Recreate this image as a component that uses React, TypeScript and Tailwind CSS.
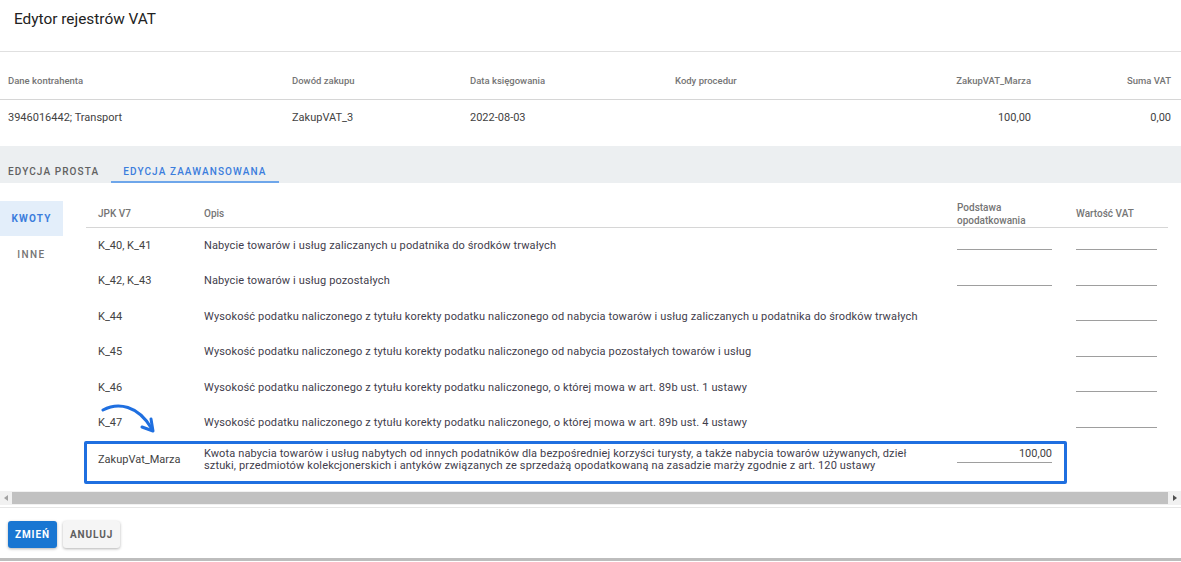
import React from "react"

interface Row {
  code: string
  desc: string[]
  base: boolean
  vat: boolean
  value?: string
  marked?: boolean
}

const rows: Row[] = [
  { code: "K_40, K_41", desc: ["Nabycie towarów i usług zaliczanych u podatnika do środków trwałych"], base: true, vat: true },
  { code: "K_42, K_43", desc: ["Nabycie towarów i usług pozostałych"], base: true, vat: true },
  {
    code: "K_44",
    desc: ["Wysokość podatku naliczonego z tytułu korekty podatku naliczonego od nabycia towarów i usług zaliczanych u podatnika do środków trwałych"],
    base: false,
    vat: true,
  },
  { code: "K_45", desc: ["Wysokość podatku naliczonego z tytułu korekty podatku naliczonego od nabycia pozostałych towarów i usług"], base: false, vat: true },
  { code: "K_46", desc: ["Wysokość podatku naliczonego z tytułu korekty podatku naliczonego, o której mowa w art. 89b ust. 1 ustawy"], base: false, vat: true },
  { code: "K_47", desc: ["Wysokość podatku naliczonego z tytułu korekty podatku naliczonego, o której mowa w art. 89b ust. 4 ustawy"], base: false, vat: true },
  {
    code: "ZakupVat_Marza",
    desc: [
      "Kwota nabycia towarów i usług nabytych od innych podatników dla bezpośredniej korzyści turysty, a także nabycia towarów używanych, dzieł",
      "sztuki, przedmiotów kolekcjonerskich i antyków związanych ze sprzedażą opodatkowaną na zasadzie marży zgodnie z art. 120 ustawy",
    ],
    base: true,
    vat: false,
    value: "100,00",
    marked: true,
  },
]

function Field({ width, value, offset }: { width: string; value?: string; offset: string }) {
  return (
    <div
      className={`${width} ${offset} relative h-[17px] border-b border-[#9e9e9e] text-right text-[11px] leading-[16px] text-[#424242]`}
    >
      {value}
    </div>
  )
}

export default function App() {
  return (
    <div className="w-[1181px] h-[562px] bg-white overflow-hidden font-['Roboto',sans-serif] text-[#424242]">
      {/* Title */}
      <div className="h-[52px] border-b border-[#e0e0e0] pl-[14px] pt-[7px]">
        <h1 className="text-[15.4px] leading-6 text-[#222]">Edytor rejestrów VAT</h1>
      </div>

      {/* Summary table */}
      <div className="grid grid-cols-[284px_178px_205px_1fr_160px_140px] pl-2 pr-[10px] h-[48px] items-end pb-[11px] border-b border-[#d6d6d6] text-[9.5px] leading-[14px] font-medium text-[#757575]">
        <div>Dane kontrahenta</div>
        <div>Dowód zakupu</div>
        <div>Data księgowania</div>
        <div>Kody procedur</div>
        <div className="text-right">ZakupVAT_Marza</div>
        <div className="text-right">Suma VAT</div>
      </div>
      <div className="grid grid-cols-[284px_178px_205px_1fr_160px_140px] pl-2 pr-[10px] h-[46px] pt-[11px] text-[11px] leading-[14px] text-[#424242]">
        <div>3946016442; Transport</div>
        <div>ZakupVAT_3</div>
        <div>2022-08-03</div>
        <div></div>
        <div className="text-right">100,00</div>
        <div className="text-right">0,00</div>
      </div>

      {/* Tabs */}
      <div className="h-[37px] bg-[#eceff1] flex items-end">
        <div className="pl-2 pr-3 pb-[2px] border-b-2 border-transparent text-[10px] leading-[14px] font-medium tracking-[0.11em] text-[#616161]">
          EDYCJA PROSTA
        </div>
        <div className="px-3 pb-[2px] border-b-2 border-[#6ea6ea] text-[10px] leading-[14px] font-medium tracking-[0.11em] text-[#3b7ddd]">
          EDYCJA ZAAWANSOWANA
        </div>
      </div>

      {/* Advanced editor */}
      <div className="flex">
        <div className="w-[63px] pt-[18px] shrink-0">
          <div className="h-[35px] bg-[#e3eefa] flex items-center justify-center text-[10px] font-bold tracking-[0.12em] text-[#3b7ddd]">
            KWOTY
          </div>
          <div className="h-[36px] flex items-center justify-center text-[10px] font-medium tracking-[0.14em] text-[#757575]">
            INNE
          </div>
        </div>

        <div className="ml-[23px] mt-[13px] w-[1082px] relative">
          <div className="grid grid-cols-[106px_753px_119px_104px] h-[32px] items-center pt-[4px] border-b border-[#d6d6d6] text-[10px] leading-[13px] font-medium text-[#757575]">
            <div className="pl-3">JPK V7</div>
            <div className="pl-3">Opis</div>
            <div className="pl-3">
              Podstawa
              <br />
              opodatkowania
            </div>
            <div className="pl-3">Wartość VAT</div>
          </div>

          {rows.map((r) => (
            <div
              key={r.code}
              className={`grid grid-cols-[106px_753px_119px_104px] text-[11px] leading-[12px] relative ${
                r.marked ? "h-[44px] items-start pt-[7px]" : "h-[35.5px] items-center"
              }`}
            >
              <div className={`pl-3 text-[#424242] ${r.marked ? "mt-[6px]" : ""}`}>{r.code}</div>
              <div className="pl-3 text-[#3f3d4c] tracking-[0.012em]">
                {r.desc.map((line) => (
                  <div key={line} className="whitespace-nowrap">
                    {line}
                  </div>
                ))}
              </div>
              <div className="pl-3">
                {r.base && <Field width="w-[95px]" value={r.value} offset={r.marked ? "-top-[2px]" : "-top-[4px]"} />}
              </div>
              <div className="pl-3">{r.vat && <Field width="w-[81px]" offset="-top-[4px]" />}</div>
              {r.marked && (
                <div className="absolute left-[-2px] top-0 w-[983px] h-[43px] border-[3px] border-[#1f6fe0] rounded-[2px] pointer-events-none" />
              )}
            </div>
          ))}

          {/* annotation arrow */}
          <svg className="absolute left-[14px] top-[206px]" width="60" height="36" viewBox="0 0 60 36" fill="none">
            <path d="M3 8 C 18 0, 38 3, 52 27" stroke="#1f6fe0" strokeWidth="3" strokeLinecap="round" />
            <path d="M42 25 L53 29 L51 17" stroke="#1f6fe0" strokeWidth="3" strokeLinecap="round" strokeLinejoin="round" />
          </svg>
        </div>
      </div>

      {/* horizontal scrollbar */}
      <div className="mt-[6px] h-[14px] bg-[#f1f1f1] flex items-center">
        <div className="w-3 flex justify-center">
          <div className="w-0 h-0 border-y-[3px] border-y-transparent border-r-[4px] border-r-[#a3a3a3]" />
        </div>
        <div className="flex-1 h-[12px] bg-[#c1c1c1]" />
        <div className="w-[13px] flex justify-center">
          <div className="w-0 h-0 border-y-[3px] border-y-transparent border-l-[4px] border-l-[#505050]" />
        </div>
      </div>
      <div className="h-[3px] border-b border-[#e6e6e6]" />

      {/* actions */}
      <div className="h-[53px] border-b-[3px] border-[#bdbdbd] flex gap-[6px] pl-2 pt-[13px]">
        <button className="h-[27px] px-[7px] bg-[#1976d2] rounded-[3px] shadow-[0_1px_3px_rgba(0,0,0,0.3)] text-white text-[10px] font-bold tracking-[0.09em]">
          ZMIEŃ
        </button>
        <button className="h-[27px] px-[7px] bg-[#f5f5f5] rounded-[3px] shadow-[0_1px_3px_rgba(0,0,0,0.3)] text-[#5f5f5f] text-[10px] font-bold tracking-[0.09em]">
          ANULUJ
        </button>
      </div>
    </div>
  )
}
